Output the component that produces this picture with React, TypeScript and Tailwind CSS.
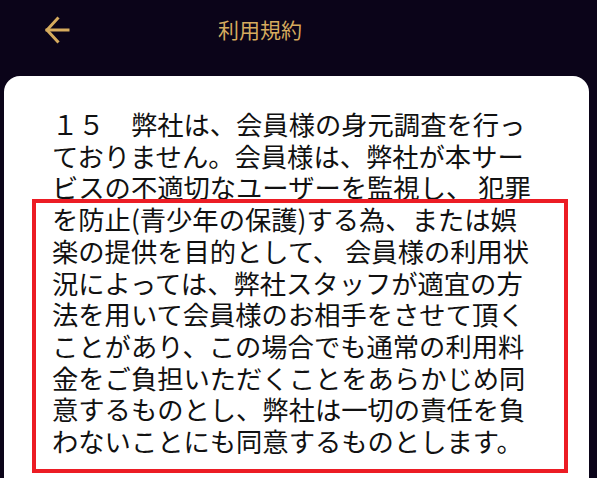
const lines = [
  "１５　弊社は、会員様の身元調査を行っ",
  "ておりません。会員様は、弊社が本サー",
  "ビスの不適切なユーザーを監視し、 犯罪",
  "を防止(青少年の保護)する為、または娯",
  "楽の提供を目的として、 会員様の利用状",
  "況によっては、弊社スタッフが適宜の方",
  "法を用いて会員様のお相手をさせて頂く",
  "ことがあり、この場合でも通常の利用料",
  "金をご負担いただくことをあらかじめ同",
  "意するものとし、弊社は一切の責任を負",
  "わないことにも同意するものとします。",
];

export default function App() {
  return (
    <div className="flex h-[478px] w-[597px] flex-col overflow-hidden bg-[#0b0419] font-['Noto_Sans_CJK_JP',sans-serif]">
      {/* header */}
      <div className="flex h-[76px] shrink-0 items-center pb-[17px] pl-[45px]">
        <svg width="26" height="30" viewBox="0 0 26 30" fill="none" stroke="#d6ab5e" strokeWidth="3" strokeLinecap="square">
          <path d="M2 15h21" />
          <path d="M12.5 3.5L2 15l10.5 11.5" />
        </svg>
        <h1 className="ml-[147px] text-[21px] leading-none text-[#d6ab5e]">利用規約</h1>
      </div>

      {/* content card */}
      <div className="relative ml-[4px] w-[585px] flex-1 rounded-t-[16px] bg-white pl-[48px] pt-[32px]">
        <p className="whitespace-nowrap text-[26.3px] leading-[31.7px] text-[#111]">
          {lines.map((l, i) => (
            <span key={i} className="block">
              {l}
            </span>
          ))}
        </p>
        <div className="absolute left-[28px] top-[123px] h-[274px] w-[536px] border-4 border-[#ec1c24]" />
      </div>
    </div>
  );
}
